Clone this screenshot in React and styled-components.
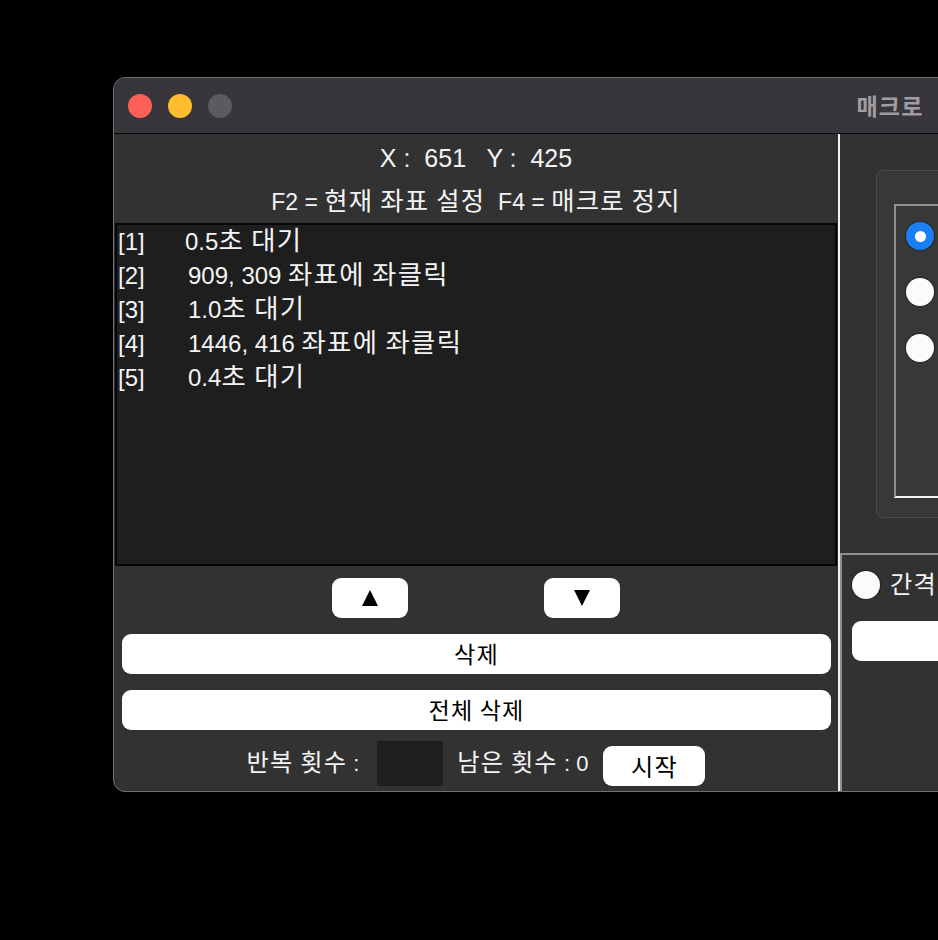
import React from "react";
import styled, { createGlobalStyle } from "styled-components";

const Global = createGlobalStyle`
  html, body { margin: 0; padding: 0; background: #000; overflow: hidden; }
  body { font-family: "Liberation Sans", "Noto Sans CJK KR", sans-serif; }
  * { box-sizing: border-box; }
`;

const Ko = styled.span`
  font-family: "Noto Sans CJK KR", sans-serif;
  font-size: 1.1em;
  letter-spacing: 0.05em;
  line-height: 1;
`;

const T = ({ children }) => {
  const parts = String(children).split(/([\uAC00-\uD7A3]+(?:\s+[\uAC00-\uD7A3]+)*)/);
  return parts.map((p, i) =>
    /[\uAC00-\uD7A3]/.test(p) ? <Ko key={i}>{p}</Ko> : <React.Fragment key={i}>{p}</React.Fragment>
  );
};

const Page = styled.div`
  width: 938px;
  height: 940px;
  padding: 77px 0 0 113px;
  overflow: hidden;
`;

const Window = styled.div`
  width: 1554px;
  height: 715px;
  border: 1px solid #707070;
  border-radius: 12px;
  overflow: hidden;
  background: #323232;
  display: flex;
  flex-direction: column;
`;

const TitleBar = styled.div`
  height: 56px;
  flex: none;
  background: #38363b;
  border-bottom: 1px solid #0a0a0a;
  position: relative;
  display: flex;
  align-items: center;
  padding-left: 14px;
  gap: 16px;
`;

const Light = styled.span`
  width: 24px;
  height: 24px;
  border-radius: 50%;
  background: ${(p) => p.$c};
`;

const Title = styled.div`
  position: absolute;
  left: 0;
  right: 0;
  top: 0;
  bottom: 0;
  display: flex;
  align-items: center;
  justify-content: center;
  color: #9e9da2;
  font-size: 21px;
  font-weight: 700;
  pointer-events: none;
`;

const Body = styled.div`
  flex: 1;
  display: flex;
`;

const LeftPanel = styled.div`
  width: 726px;
  flex: none;
  border-right: 2px solid #f2f2f2;
  display: flex;
  flex-direction: column;
`;

const Header = styled.div`
  height: 89px;
  display: flex;
  flex-direction: column;
  align-items: center;
  color: #f4f4f4;
  padding-top: 9px;
  gap: 14px;
  line-height: 30px;
`;

const HeaderLine = styled.div`
  white-space: pre;
  font-size: ${(p) => p.$fs};
`;

const List = styled.div`
  height: 343px;
  margin: 0 1px;
  background: #1e1e1e;
  border: 2px solid #050505;
  padding: 0 0 0 1px;
  display: flex;
  flex-direction: column;
`;

const Row = styled.div`
  height: 34px;
  line-height: 34px;
  display: flex;
  align-items: baseline;
  color: #f4f4f4;
  font-size: 24px;
`;

const Index = styled.span`
  width: ${(p) => (p.$narrow ? "67px" : "70px")};
  flex: none;
`;

const ArrowRow = styled.div`
  display: flex;
  justify-content: center;
  gap: 136px;
  margin-top: 12px;
`;

const WhiteButton = styled.button`
  height: 40px;
  border: none;
  border-radius: 9px;
  background: #fff;
  color: #000;
  font-family: inherit;
  font-size: ${(p) => p.$fs || "21px"};
  display: flex;
  align-items: center;
  justify-content: center;
  padding: 0;
  width: ${(p) => p.$w || "auto"};
`;

const WideButton = styled(WhiteButton)`
  margin: 16px 7px 0 8px;
`;

const Triangle = styled.svg`
  width: 18px;
  height: 18px;
`;

const BottomRow = styled.div`
  display: flex;
  align-items: center;
  justify-content: center;
  margin-top: 10px;
  color: #f4f4f4;
  font-size: 22px;
  white-space: pre;
`;

const CountBox = styled.div`
  width: 66px;
  height: 45px;
  background: #1f1f1f;
  margin: 0 14px 0 18px;
`;

const StartButton = styled(WhiteButton)`
  margin-left: 15px;
  margin-top: 6px;
`;

const RightPanel = styled.div`
  flex: 1;
  display: flex;
  flex-direction: column;
`;

const RightTop = styled.div`
  height: 419px;
  padding: 36px 0 0 36px;
`;

const GroupBox = styled.div`
  width: 400px;
  height: 348px;
  border: 1px solid #4c4c4c;
  border-radius: 7px;
  background: #383838;
  padding: 33px 0 0 17px;
`;

const InnerBox = styled.div`
  height: 294px;
  border: 2px solid #8f8f8f;
  border-bottom-color: #f4f4f4;
  padding: 16px 0 0 10px;
  display: flex;
  flex-direction: column;
  gap: 28px;
`;

const Radio = styled.span`
  width: 28px;
  height: 28px;
  border-radius: 50%;
  flex: none;
  background: ${(p) => (p.$on ? "#1a7ff3" : "#fbfbfb")};
  box-shadow: 0 0 1px 1px rgba(0, 0, 0, 0.35);
  display: flex;
  align-items: center;
  justify-content: center;
  &::after {
    content: "";
    display: ${(p) => (p.$on ? "block" : "none")};
    width: 11px;
    height: 11px;
    border-radius: 50%;
    background: #fff;
  }
`;

const RightBottom = styled.div`
  flex: 1;
  border-top: 2px solid #8f8f8f;
  border-left: 2px solid #8f8f8f;
  padding: 16px 0 0 10px;
  display: flex;
  flex-direction: column;
`;

const RadioLine = styled.div`
  display: flex;
  align-items: center;
  gap: 10px;
  color: #f4f4f4;
  font-size: 22px;
`;

const SideButton = styled(WhiteButton)`
  margin-top: 22px;
  width: 400px;
`;

const Up = () => (
  <Triangle viewBox="0 0 18 18">
    <polygon points="9,1 17,17 1,17" fill="#000" />
  </Triangle>
);
const Down = () => (
  <Triangle viewBox="0 0 18 18">
    <polygon points="1,1 17,1 9,17" fill="#000" />
  </Triangle>
);

const rows = [
  ["[1]", "0.5초 대기", true],
  ["[2]", "909, 309 좌표에 좌클릭"],
  ["[3]", "1.0초 대기"],
  ["[4]", "1446, 416 좌표에 좌클릭"],
  ["[5]", "0.4초 대기"],
];

export default function App() {
  return (
    <Page>
      <Global />
      <Window>
        <TitleBar>
          <Light $c="#fe5f57" />
          <Light $c="#febc2e" />
          <Light $c="#5b5a60" />
          <Title><T>매크로</T></Title>
        </TitleBar>
        <Body>
          <LeftPanel>
            <Header>
              <HeaderLine $fs="25px">{"X :  651   Y :  425"}</HeaderLine>
              <HeaderLine $fs="23px"><T>{"F2 = 현재 좌표 설정  F4 = 매크로 정지"}</T></HeaderLine>
            </Header>
            <List>
              {rows.map(([i, t, n]) => (
                <Row key={i}>
                  <Index $narrow={n}>{i}</Index>
                  <span><T>{t}</T></span>
                </Row>
              ))}
            </List>
            <ArrowRow>
              <WhiteButton $w="76px"><Up /></WhiteButton>
              <WhiteButton $w="76px"><Down /></WhiteButton>
            </ArrowRow>
            <WideButton><T>삭제</T></WideButton>
            <WideButton><T>전체 삭제</T></WideButton>
            <BottomRow>
              <span><T>반복 횟수 :</T></span>
              <CountBox />
              <span><T>남은 횟수 : 0</T></span>
              <StartButton $w="102px" $fs="22px"><T>시작</T></StartButton>
            </BottomRow>
          </LeftPanel>
          <RightPanel>
            <RightTop>
              <GroupBox>
                <InnerBox>
                  <Radio $on />
                  <Radio />
                  <Radio />
                </InnerBox>
              </GroupBox>
            </RightTop>
            <RightBottom>
              <RadioLine>
                <Radio />
                <span><T>간격</T></span>
              </RadioLine>
              <SideButton />
            </RightBottom>
          </RightPanel>
        </Body>
      </Window>
    </Page>
  );
}
